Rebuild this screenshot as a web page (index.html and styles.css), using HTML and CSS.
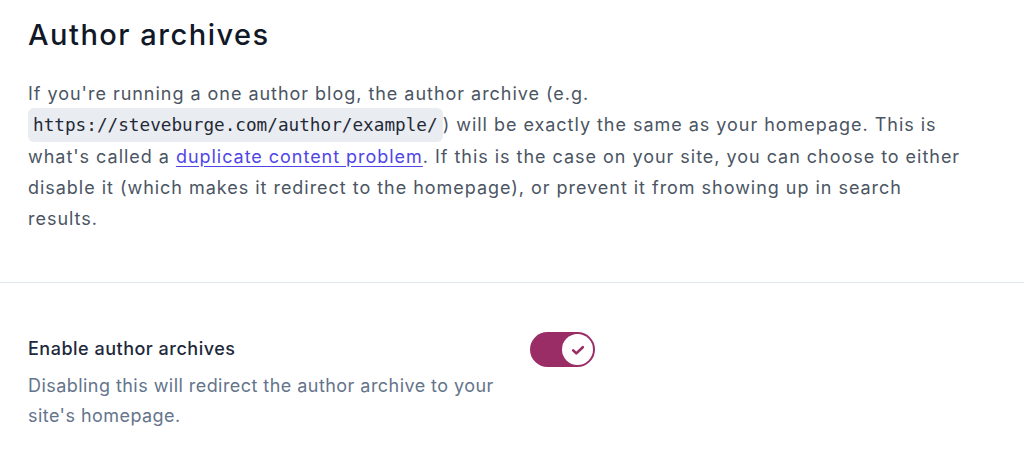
FILE: index.html
```html
<!DOCTYPE html>
<html lang="en">
<head>
<meta charset="utf-8">
<title>Author archives</title>
<link rel="stylesheet" href="styles.css">
</head>
<body>
<main class="settings">
  <section class="intro">
    <h1 class="title">Author archives</h1>
    <p class="lead">If you're running a one author blog, the author archive (e.g. <code class="code">https://steveburge.com/author/example/</code>) will be exactly the same as your homepage. This is what's called a <a class="link" href="#">duplicate content problem</a>. If this is the case on your site, you can choose to either disable it (which makes it redirect to the homepage), or prevent it from showing up in search results.</p>
  </section>
  <hr class="divider">
  <section class="field">
    <div class="field-text">
      <div class="field-label">Enable author archives</div>
      <p class="field-desc">Disabling this will redirect the author archive to your site's homepage.</p>
    </div>
    <div class="toggle" role="switch" aria-checked="true">
      <span class="knob">
        <svg viewBox="0 0 20 20" width="20" height="20" aria-hidden="true"><path d="M5.2 10.4l3.1 3L14.8 7.2" fill="none" stroke="#9b2d66" stroke-width="2.6" stroke-linecap="round" stroke-linejoin="round"/></svg>
      </span>
    </div>
  </section>
</main>
</body>
</html>
```
FILE: styles.css
```css
* { box-sizing: border-box; }
html, body { margin: 0; padding: 0; background: #ffffff; }
body {
  font-family: Inter, "Noto Sans", "Liberation Sans", sans-serif;
  color: #475569;
}
.settings { width: 1024px; }
.intro { padding: 0 28px; width: 998px; }
.title {
  margin: 17px 0 0 0;
  font-size: 29px;
  line-height: 36px;
  font-weight: 500;
  letter-spacing: 1.5px;
  color: #111827;
}
.lead {
  margin: 25px 0 0 0;
  font-size: 18px;
  line-height: 31px;
  letter-spacing: 0.97px;
  color: #4b5563;
}
.code {
  font-family: "DejaVu Sans Mono", "Liberation Mono", monospace;
  font-size: 17.7px;
  letter-spacing: 0;
  background: #e9ecf0;
  border-radius: 6px;
  padding: 7px 5px 7px 5px;
  color: #1f2937;
}
.link { color: #4f46e5; text-decoration: underline; text-underline-offset: 3px; }
.divider {
  margin: 48px 0 0 0;
  border: 0;
  border-top: 1px solid #e2e8f0;
  height: 0;
}
.field {
  display: grid;
  grid-template-columns: 474px auto;
  column-gap: 28px;
  align-items: start;
  padding: 51px 28px 0 28px;
}
.field-label {
  font-size: 18px;
  line-height: 30px;
  font-weight: 500;
  letter-spacing: 0.5px;
  color: #1e293b;
}
.field-desc {
  margin: 7px 0 0 0;
  font-size: 18px;
  line-height: 30px;
  letter-spacing: 0.45px;
  color: #64748b;
}
.toggle {
  width: 65px;
  height: 35px;
  border-radius: 18px;
  background: #9b2d66;
  display: flex;
  align-items: center;
  justify-content: flex-end;
  padding: 2px;
  margin-top: -2px;
}
.knob {
  width: 31px;
  height: 31px;
  border-radius: 50%;
  background: #ffffff;
  display: flex;
  align-items: center;
  justify-content: center;
}
```
